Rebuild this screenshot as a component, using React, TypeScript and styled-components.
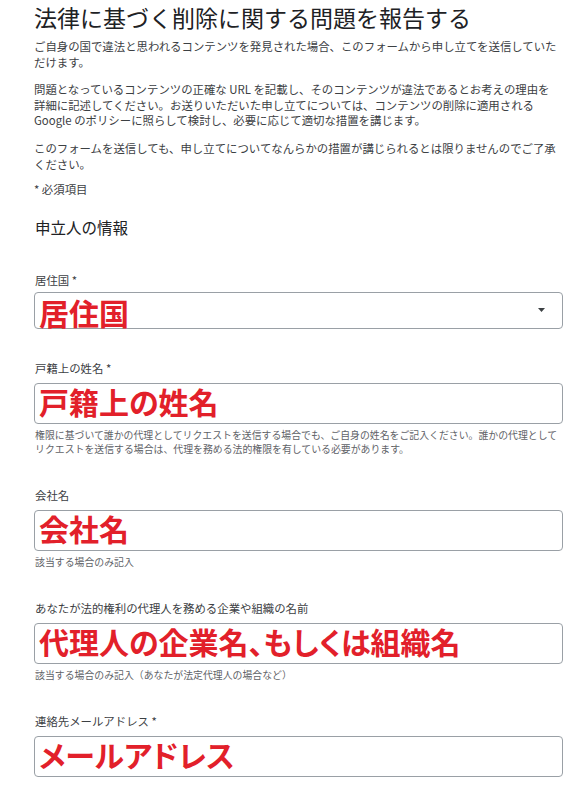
import React from "react";
import styled, { createGlobalStyle } from "styled-components";

const GlobalStyle = createGlobalStyle`
  html, body {
    margin: 0;
    padding: 0;
    background: #ffffff;
  }
  body {
    font-family: "Noto Sans CJK JP", "Noto Sans", sans-serif;
  }
`;

const Page = styled.main`
  width: 529px;
  padding: 0 20px 40px 34px;
  display: flex;
  flex-direction: column;
`;

const Title = styled.h1`
  margin: 0;
  font-size: 23px;
  line-height: 30px;
  font-weight: 400;
  color: #202124;
  padding-top: 2px;
  white-space: nowrap;
`;

const Para = styled.p<{ $mt?: number }>`
  margin: ${(p) => p.$mt ?? 12}px 0 0;
  font-size: 11.4px;
  line-height: 15.6px;
  color: #3c4043;
`;

const SectionHeading = styled.h2`
  margin: 19px 0 0 1px;
  font-size: 15.5px;
  line-height: 20px;
  font-weight: 400;
  color: #202124;
`;

const FieldList = styled.div`
  display: flex;
  flex-direction: column;
  margin-top: 35px;
  gap: 31px;
`;

const Field = styled.div`
  display: flex;
  flex-direction: column;
`;

const Label = styled.label<{ $gap: number }>`
  font-size: 11.4px;
  line-height: 16px;
  color: #3c4043;
  margin-bottom: ${(p) => p.$gap}px;
  margin-left: 1px;
`;

const Box = styled.div<{ $h: number; $pt: number }>`
  box-sizing: border-box;
  height: ${(p) => p.$h}px;
  border: 1px solid #9aa0a6;
  border-radius: 4px;
  padding: ${(p) => p.$pt}px 36px 0 4px;
  position: relative;
  display: flex;
  align-items: flex-start;
`;

const RedValue = styled.span`
  font-family: "Noto Sans CJK JP", sans-serif;
  font-size: 30px;
  line-height: 30px;
  font-weight: 700;
  color: #e2202a;
  font-feature-settings: "palt";
  white-space: nowrap;
`;

const Arrow = styled.svg`
  position: absolute;
  right: 17px;
  top: 15px;
`;

const Helper = styled.div`
  margin-top: 4px;
  margin-left: 1px;
  font-size: 9.9px;
  line-height: 14px;
  color: #5f6368;
`;

type FieldDef = {
  label: string;
  value: string;
  select?: boolean;
  helper?: string;
};

const fields: FieldDef[] = [
  { label: "居住国 *", value: "居住国", select: true },
  {
    label: "戸籍上の姓名 *",
    value: "戸籍上の姓名",
    helper:
      "権限に基づいて誰かの代理としてリクエストを送信する場合でも、ご自身の姓名をご記入ください。誰かの代理としてリクエストを送信する場合は、代理を務める法的権限を有している必要があります。",
  },
  { label: "会社名", value: "会社名", helper: "該当する場合のみ記入" },
  {
    label: "あなたが法的権利の代理人を務める企業や組織の名前",
    value: "代理人の企業名、もしくは組織名",
    helper: "該当する場合のみ記入（あなたが法定代理人の場合など）",
  },
  { label: "連絡先メールアドレス *", value: "メールアドレス" },
];

export default function App() {
  return (
    <>
      <GlobalStyle />
      <Page>
        <Title>法律に基づく削除に関する問題を報告する</Title>
        <Para $mt={7}>
          ご自身の国で違法と思われるコンテンツを発見された場合、このフォームから申し立てを送信していただけます。
        </Para>
        <Para>
          問題となっているコンテンツの正確な URL を記載し、そのコンテンツが違法であるとお考えの理由を
          <br />
          詳細に記述してください。お送りいただいた申し立てについては、コンテンツの削除に適用される
          <br />
          Google のポリシーに照らして検討し、必要に応じて適切な措置を講じます。
        </Para>
        <Para>
          このフォームを送信しても、申し立てについてなんらかの措置が講じられるとは限りませんのでご了承ください。
        </Para>
        <Para $mt={10}>* 必須項目</Para>
        <SectionHeading>申立人の情報</SectionHeading>
        <FieldList>
          {fields.map((f) => (
            <Field key={f.label}>
              <Label $gap={f.select ? 4 : 7}>{f.label}</Label>
              <Box $h={f.select ? 37 : 41} $pt={f.select ? 4 : 2}>
                <RedValue>{f.value}</RedValue>
                {f.select && (
                  <Arrow width="7" height="4" viewBox="0 0 7 4" aria-hidden="true">
                    <path d="M0 0 L7 0 L3.5 4 Z" fill="#3c4043" />
                  </Arrow>
                )}
              </Box>
              {f.helper && <Helper>{f.helper}</Helper>}
            </Field>
          ))}
        </FieldList>
      </Page>
    </>
  );
}
